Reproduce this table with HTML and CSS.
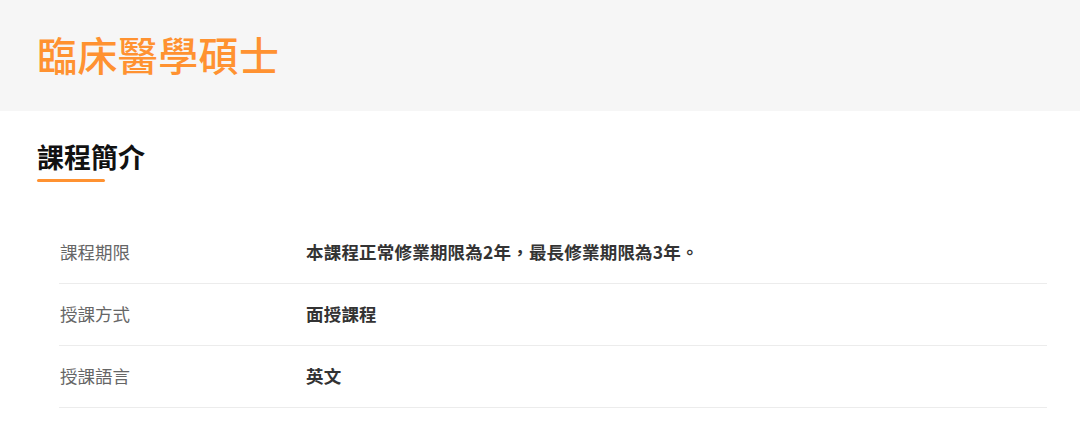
FILE: index.html
```html
<!DOCTYPE html>
<html lang="zh-Hant">
<head>
<meta charset="utf-8">
<link rel="stylesheet" href="styles.css">
</head>
<body>
<header class="banner">
  <h1 class="banner-title">臨床醫學碩士</h1>
</header>
<main class="content">
  <h2 class="section-title">課程簡介</h2>
  <div class="section-rule"></div>
  <div class="info-table">
    <div class="info-row">
      <div class="info-label">課程期限</div>
      <div class="info-value">本課程正常修業期限為2年，最長修業期限為3年。</div>
    </div>
    <div class="info-row">
      <div class="info-label">授課方式</div>
      <div class="info-value">面授課程</div>
    </div>
    <div class="info-row">
      <div class="info-label">授課語言</div>
      <div class="info-value">英文</div>
    </div>
  </div>
</main>
</body>
</html>
```
FILE: styles.css
```css
* { box-sizing: border-box; }
html, body {
  margin: 0;
  padding: 0;
  background: #ffffff;
  font-family: "Noto Sans CJK TC", "Noto Sans", sans-serif;
}
.banner {
  height: 111px;
  background: #f6f6f6;
  display: flex;
  align-items: center;
  padding: 0 0 3px 37px;
}
.banner-title {
  margin: 0;
  font-size: 40px;
  line-height: 48px;
  font-weight: 500;
  color: #ff9231;
  letter-spacing: 0.4px;
}
.content {
  padding: 0 34px 0 37px;
}
.section-title {
  margin: 28px 0 0;
  font-size: 27px;
  line-height: 36px;
  font-weight: 700;
  color: #111111;
}
.section-rule {
  margin-top: 4px;
  width: 68px;
  height: 3px;
  border-radius: 2px;
  background: #ff9231;
}
.info-table {
  margin: 40px 0 0 22px;
  width: 988px;
}
.info-row {
  display: flex;
  align-items: center;
  height: 62px;
  padding-bottom: 3px;
  border-bottom: 1px solid #ececec;
}
.info-label {
  width: 247px;
  padding-left: 1px;
  font-size: 17.5px;
  color: #666666;
}
.info-value {
  font-size: 17.5px;
  font-weight: 700;
  color: #333333;
  letter-spacing: 0.2px;
}
```
